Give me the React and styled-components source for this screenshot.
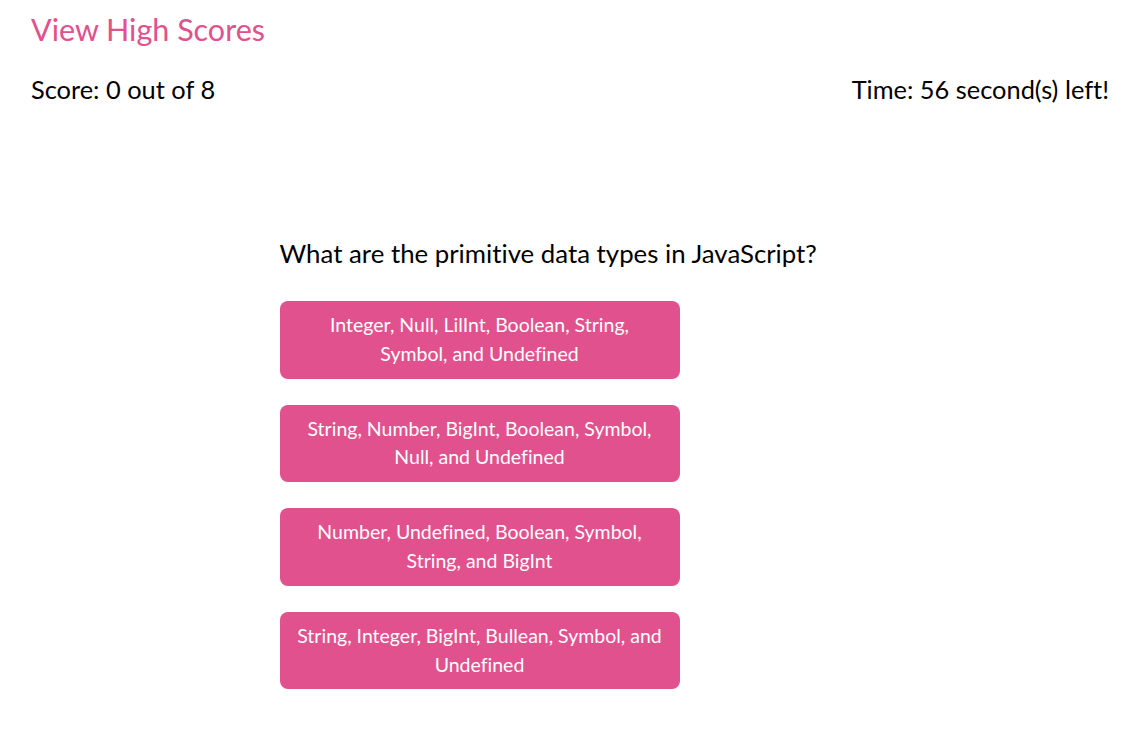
import React from "react";
import styled, { createGlobalStyle } from "styled-components";

const questions = [
  {
    title: "What are the primitive data types in JavaScript?",
    choices: [
      "Integer, Null, LilInt, Boolean, String, Symbol, and Undefined",
      "String, Number, BigInt, Boolean, Symbol, Null, and Undefined",
      "Number, Undefined, Boolean, Symbol, String, and BigInt",
      "String, Integer, BigInt, Bullean, Symbol, and Undefined",
    ],
  },
];

const App = () => {
  const current = questions[0];

  return (
    <>
      <GlobalStyle />
      <Header>
        <HighScoresLink href="#">View High Scores</HighScoresLink>
        <StatusRow>
          <Status>Score: 0 out of 8</Status>
          <Status>Time: 56 second(s) left!</Status>
        </StatusRow>
      </Header>
      <Quiz>
        <Question>{current.title}</Question>
        <Choices>
          {current.choices.map((choice) => (
            <Choice key={choice}>{choice}</Choice>
          ))}
        </Choices>
      </Quiz>
    </>
  );
};

export default App;

//CSS
const pink = "#e1518d";

const GlobalStyle = createGlobalStyle`
  body {
    margin: 0;
    background: #ffffff;
    color: #000000;
    font-family: "Lato", "Open Sans", sans-serif;
    font-variant-ligatures: no-common-ligatures;
  }
`;

const Header = styled.header`
  padding: 11px 30px 0 31px;
`;

const HighScoresLink = styled.a`
  display: block;
  font-size: 30.5px;
  line-height: 36px;
  color: ${pink};
  text-decoration: none;
`;

const StatusRow = styled.div`
  display: flex;
  justify-content: space-between;
  margin-top: 27px;
`;

const Status = styled.span`
  font-size: 25.4px;
  line-height: 30px;
`;

const Quiz = styled.main`
  width: 580px;
  margin: 134px auto 0;
`;

const Question = styled.h2`
  margin: 0;
  font-size: 25.8px;
  font-weight: 400;
  line-height: 30px;
`;

const Choices = styled.div`
  display: flex;
  flex-direction: column;
  gap: 26px;
  margin-top: 33px;
`;

const Choice = styled.button`
  width: 400px;
  padding: 10px 15px;
  border: none;
  border-radius: 8px;
  background: ${pink};
  color: #ffffff;
  font-family: inherit;
  font-variant-ligatures: no-common-ligatures;
  font-size: 19.5px;
  line-height: 28.8px;
  text-align: center;
  cursor: pointer;
`;
